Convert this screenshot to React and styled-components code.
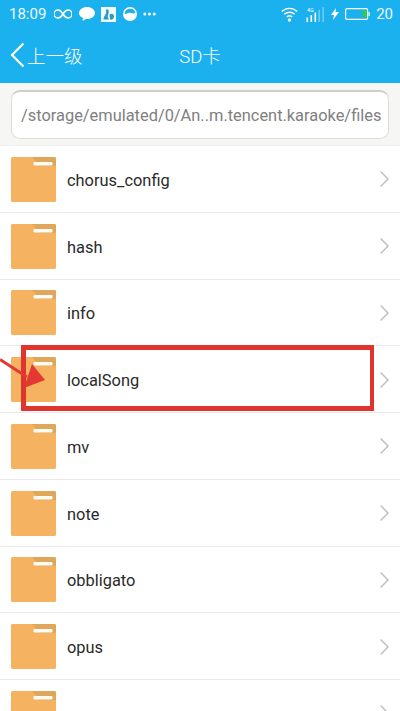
import styled, { createGlobalStyle } from 'styled-components';

const FOLDERS = ['chorus_config', 'hash', 'info', 'localSong', 'mv', 'note', 'obbligato', 'opus', 'pcm'];

const GlobalStyle = createGlobalStyle`
  html, body {
    margin: 0;
    padding: 0;
    background: #fff;
  }
  body {
    font-family: Roboto, "Noto Sans CJK SC", sans-serif;
  }
`;

function FolderIcon() {
  return (
    <FolderSvg viewBox='0 0 45 45'>
      <rect width='45' height='45' rx='1.5' fill='#f5b261' />
      <path d='M21 0H43.5A1.5 1.5 0 0 1 45 1.5V9H29z' fill='#dfa759' />
      <rect x='22.5' y='5' width='19' height='3.6' rx='1' fill='#fdfbf6' />
    </FolderSvg>
  );
}

function Chevron() {
  return (
    <ChevronSvg viewBox='0 0 9 16'>
      <path d='M.6 .6L8 8 .6 15.4' fill='none' stroke='#bdbdbd' strokeWidth='1.4' />
    </ChevronSvg>
  );
}

function StatusLeft() {
  return (
    <LeftGroup>
      <Clock>18:09</Clock>
      <svg width='18' height='10' viewBox='0 0 18 10'>
        <path
          d='M9 5C7.500 2.500 6 1 4 1a4 4 0 0 0 0 8c2 0 3.500-1.500 5-4s3-4 5-4a4 4 0 0 1 0 8c-2 0-3.500-1.500-5-4z'
          fill='none'
          stroke='#fff'
          strokeWidth='1.500'
        />
      </svg>
      <svg width='16' height='14' viewBox='0 0 16 14'>
        <path d='M8 0c4.400 0 8 2.700 8 6s-3.600 6-8 6l-1 0-3.500 2 .5-3C1.500 10 0 8.200 0 6c0-3.300 3.600-6 8-6z' fill='#fff' />
      </svg>
      <svg width='15' height='15' viewBox='0 0 15 15'>
        <rect width='15' height='15' fill='#f4f8fa' />
        <path d='M2.500 12.500c0-3 1.500-4 2.500-6S4 3.500 5.500 2.500 8.500 4 7.500 6.500 6.500 10.500 8 12.500z' fill='#2b9bc4' />
        <path d='M8.500 7.500c2-1.500 4.500-.5 4.500 2s-2 3.500-4 3z' fill='#2b9bc4' />
      </svg>
      <svg width='14' height='14' viewBox='0 0 14 14'>
        <circle cx='7' cy='7' r='7' fill='#fff' />
        <path d='M1.600 6.800A5.500 5.500 0 0 1 12.400 5.800C10 7.200 8.500 5.800 6.500 5.800S3.500 7.500 1.600 6.800z' fill='#1bb0ee' />
      </svg>
      <svg width='13' height='4' viewBox='0 0 13 4'>
        <circle cx='1.800' cy='2' r='1.500' fill='#fff' />
        <circle cx='6.500' cy='2' r='1.500' fill='#fff' />
        <circle cx='11.200' cy='2' r='1.500' fill='#fff' />
      </svg>
    </LeftGroup>
  );
}

function StatusRight() {
  return (
    <RightGroup>
      <svg width='17' height='15' viewBox='0 0 17 15'>
        <g fill='none' stroke='#fff' strokeWidth='1.400'>
          <path d='M.800 4.500c4.500-4.200 10.900-4.200 15.400 0' />
          <path d='M3.300 7.300c3-2.800 7.400-2.800 10.400 0' />
          <path d='M5.800 10c1.500-1.300 3.900-1.300 5.400 0' />
        </g>
        <circle cx='8.500' cy='13' r='1.700' fill='#fff' />
      </svg>
      <SignalSvg width='19' height='15' viewBox='0 0 19 15'>
        <text x='1' y='5' fontSize='5.500' fill='#fff' fontFamily='Roboto, sans-serif'>4G</text>
        <rect x='0.500' y='10.500' width='1.600' height='4.500' fill='#fff' />
        <rect x='4.500' y='8' width='1.600' height='7' fill='#fff' />
        <rect x='8.500' y='5.500' width='1.600' height='9.500' fill='#fff' />
        <rect x='12.500' y='3' width='1.300' height='12' fill='#fff' opacity='.45' />
        <rect x='16.500' y='0' width='1.300' height='15' fill='#fff' opacity='.45' />
      </SignalSvg>
      <svg width='8' height='12' viewBox='0 0 8 12'>
        <path d='M5 0L0 7h3l-1 5 6-8H4.500z' fill='#fff' />
      </svg>
      <svg width='25' height='12' viewBox='0 0 25 12'>
        <rect x='.600' y='.600' width='22' height='10.800' rx='1.500' fill='none' stroke='#fff' strokeWidth='1.200' />
        <rect x='17.500' y='2.500' width='4' height='7' fill='#25d24a' />
        <rect x='23.500' y='4' width='1.200' height='4' fill='#fff' />
      </svg>
      <BatteryText>20</BatteryText>
    </RightGroup>
  );
}

export default function App() {
  return (
    <Page>
      <GlobalStyle />
      <Header>
        <StatusBar>
          <StatusLeft />
          <StatusRight />
        </StatusBar>
        <TitleBar>
          <BackButton>
            <svg width='15' height='26' viewBox='0 0 15 26'>
              <path d='M13.500 1.500L2 13l11.500 11.500' fill='none' stroke='#fff' strokeWidth='2.200' />
            </svg>
            <span>上一级</span>
          </BackButton>
          <Title>SD卡</Title>
        </TitleBar>
      </Header>
      <PathBar>
        <PathBox>/storage/emulated/0/An..m.tencent.karaoke/files</PathBox>
      </PathBar>
      <List>
        {FOLDERS.map((name) => (
          <Row key={name}>
            <FolderIcon />
            <Name>{name}</Name>
            <Chevron />
          </Row>
        ))}
      </List>
      <Highlight />
      <ArrowSvg viewBox='0 0 50 40'>
        <path d='M0 8.500L27 26' stroke='#e23a32' strokeWidth='3' />
        <path d='M32 13L45 29L24 37z' fill='#e23a32' />
      </ArrowSvg>
    </Page>
  );
}

const Page = styled.div`
  position: relative;
  width: 400px;
  height: 711px;
  overflow: hidden;
  background: #fff;
`;

const Header = styled.header`
  height: 83px;
  background: #1bb0ee;
  color: #fff;
`;

const StatusBar = styled.div`
  height: 28px;
  padding: 0 7px 0 9px;
  display: flex;
  align-items: center;
  justify-content: space-between;
`;

const LeftGroup = styled.div`
  display: flex;
  align-items: center;
  gap: 6.5px;
`;

const RightGroup = styled.div`
  display: flex;
  align-items: center;
  gap: 6px;
`;

const SignalSvg = styled.svg`
  margin-left: 2px;
`;

const Clock = styled.span`
  font-size: 15px;
  margin-right: 1.5px;
  color: #eef9fe;
`;

const BatteryText = styled.span`
  font-size: 15px;
  color: #eef9fe;
`;

const TitleBar = styled.div`
  position: relative;
  height: 55px;
  display: flex;
  align-items: center;
  justify-content: center;
`;

const BackButton = styled.div`
  position: absolute;
  left: 10px;
  top: 14px;
  display: flex;
  align-items: center;
  gap: 2px;
  font-size: 18.5px;
  font-weight: 300;
`;

const Title = styled.div`
  font-size: 18.5px;
  font-weight: 300;
  margin-top: -1px;
`;

const PathBar = styled.div`
  height: 63px;
  padding: 7px 11px;
  box-sizing: border-box;
  background: #f6f6f4;
  border-bottom: 1px solid #efefed;
`;

const PathBox = styled.div`
  height: 49px;
  box-sizing: border-box;
  padding: 0 9px;
  display: flex;
  align-items: center;
  white-space: nowrap;
  overflow: hidden;
  font-size: 16.4px;
  color: #808080;
  background: #fff;
  border: 1px solid #dcdcd8;
  border-top: 2px solid #cfcfc9;
  border-radius: 9px;
`;

const List = styled.div`
  display: flex;
  flex-direction: column;
`;

const Row = styled.div`
  height: 66.75px;
  flex: none;
  box-sizing: border-box;
  padding: 1px 11px 0;
  display: flex;
  align-items: center;
  gap: 11px;
  border-bottom: 1px solid #e9e9e9;
`;

const FolderSvg = styled.svg`
  width: 45px;
  height: 45px;
  flex: none;
`;

const Name = styled.div`
  flex: 1;
  padding-top: 2px;
  font-size: 16.4px;
  color: #2a2a2a;
`;

const ChevronSvg = styled.svg`
  width: 9px;
  height: 16px;
  flex: none;
`;

const Highlight = styled.div`
  position: absolute;
  left: 21px;
  top: 345px;
  width: 353px;
  height: 66px;
  box-sizing: border-box;
  border: 5px solid #e0352f;
  border-right-width: 4px;
`;

const ArrowSvg = styled.svg`
  position: absolute;
  left: 0;
  top: 351px;
  width: 50px;
  height: 40px;
`;
